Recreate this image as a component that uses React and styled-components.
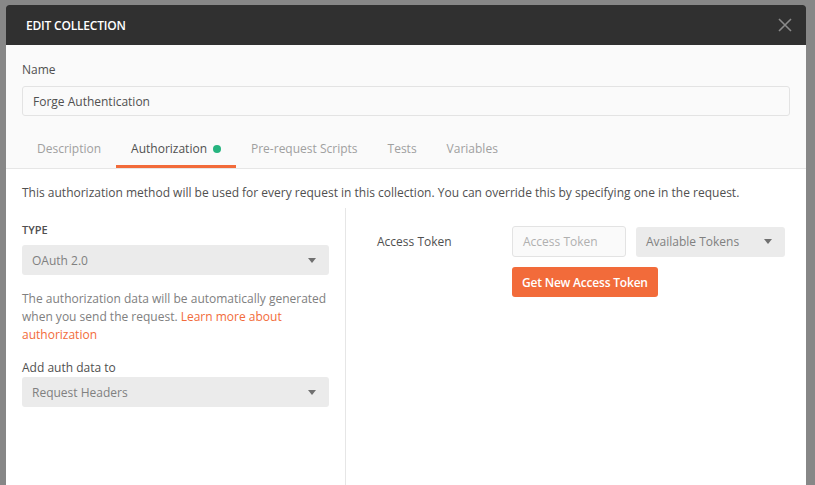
import React from 'react';
import styled, { createGlobalStyle } from 'styled-components';

const GlobalStyle = createGlobalStyle`
  html, body {
    margin: 0;
    padding: 0;
    background: #878787;
    overflow: hidden;
  }
  body {
    font-family: 'Open Sans', 'Noto Sans', sans-serif;
  }
`;

const Backdrop = styled.div`
  width: 815px;
  height: 485px;
  padding: 5px 0 0 6px;
  box-sizing: border-box;
  overflow: hidden;
`;

const Modal = styled.div`
  width: 800px;
  height: 600px;
  background: #fafafa;
  border-radius: 3px 3px 0 0;
  overflow: hidden;
  display: flex;
  flex-direction: column;
`;

const Header = styled.div`
  height: 40px;
  background: #303030;
  display: flex;
  align-items: center;
  justify-content: space-between;
  padding: 0 14px 0 20px;
  flex-shrink: 0;

  & > h2 {
    margin: 0;
    color: #fff;
    font-size: 12px;
    font-weight: 600;
    letter-spacing: -0.2px;
  }
`;

const Close = styled.button`
  border: none;
  background: none;
  padding: 0;
  width: 14px;
  height: 14px;
  display: flex;
  cursor: pointer;
`;

const Top = styled.div`
  padding: 16px 16px 0;
  border-bottom: 1px solid #e6e6e6;
`;

const Label = styled.div`
  font-size: 12px;
  color: #505050;
  line-height: 18px;
  margin-bottom: ${p => p.gap || 0}px;
`;

const NameInput = styled.div`
  height: 28px;
  border: 1px solid #e3e3e3;
  border-radius: 3px;
  background: #fafafa;
  display: flex;
  align-items: center;
  padding: 0 10px;
  font-size: 12px;
  color: #505050;
`;

const Tabs = styled.div`
  display: flex;
  margin-top: 14px;
`;

const Tab = styled.div`
  padding: 0 15px;
  height: 38px;
  display: flex;
  align-items: center;
  gap: 6px;
  font-size: 12px;
  color: ${p => (p.active ? '#505050' : '#a0a0a0')};
  border-bottom: 3px solid ${p => (p.active ? '#f26b3a' : 'transparent')};
  box-sizing: border-box;
  padding-top: 2px;
`;

const Dot = styled.span`
  width: 8px;
  height: 8px;
  border-radius: 50%;
  background: #26b47f;
`;

const Content = styled.div`
  flex: 1;
  background: #fff;
`;

const Intro = styled.p`
  margin: 0;
  padding: 15px 16px 0;
  font-size: 12px;
  line-height: 18px;
  color: #505050;
`;

const Columns = styled.div`
  display: grid;
  grid-template-columns: 340px 1fr;
  margin-top: 6px;
  height: 300px;
`;

const Left = styled.div`
  padding: 13px 16px 0 16px;
  border-right: 1px solid #e6e6e6;
  display: flex;
  flex-direction: column;
`;

const TypeLabel = styled.div`
  font-size: 11px;
  font-weight: 600;
  color: #505050;
  line-height: 18px;
  margin-bottom: 6px;
`;

const Select = styled.div`
  height: 30px;
  background: #ebebeb;
  border-radius: 3px;
  display: flex;
  align-items: center;
  justify-content: space-between;
  padding: 0 13px 0 10px;
  font-size: 12px;
  color: #808080;
  box-sizing: border-box;
`;

const Caret = styled.span`
  width: 0;
  height: 0;
  border-left: 4px solid transparent;
  border-right: 4px solid transparent;
  border-top: 5px solid #707070;
`;

const Help = styled.p`
  margin: 15px 0 15px;
  font-size: 12px;
  line-height: 18px;
  color: #808080;

  & > a {
    color: #f26b3a;
    text-decoration: none;
  }
`;

const Right = styled.div`
  padding: 18px 0 0 31px;
`;

const Row = styled.div`
  display: grid;
  grid-template-columns: 125px 114px 149px;
  column-gap: 10px;
  row-gap: 10px;
  align-items: center;
`;

const FieldLabel = styled.div`
  font-size: 12px;
  color: #505050;
`;

const TokenInput = styled.div`
  height: 29px;
  border: 1px solid #e3e3e3;
  border-radius: 3px;
  background: #fafafa;
  display: flex;
  align-items: center;
  padding: 0 10px;
  font-size: 12px;
  color: #b0b0b0;
`;

const Button = styled.button`
  grid-column: 2 / span 2;
  justify-self: start;
  height: 30px;
  padding: 0 10px;
  border: none;
  border-radius: 3px;
  background: #f26b3a;
  color: #fff;
  font-family: inherit;
  font-size: 12px;
  font-weight: 600;
  letter-spacing: -0.2px;
`;

export default function App() {
  return (
    <Backdrop>
      <GlobalStyle />
      <Modal>
        <Header>
          <h2>EDIT COLLECTION</h2>
          <Close aria-label="Close">
            <svg width="14" height="14" viewBox="0 0 14 14">
              <path d="M1 1 L13 13 M13 1 L1 13" stroke="#8a8a8a" strokeWidth="1.6" />
            </svg>
          </Close>
        </Header>
        <Top>
          <Label gap={7}>Name</Label>
          <NameInput>Forge Authentication</NameInput>
          <Tabs>
            <Tab>Description</Tab>
            <Tab active>
              Authorization <Dot />
            </Tab>
            <Tab>Pre-request Scripts</Tab>
            <Tab>Tests</Tab>
            <Tab>Variables</Tab>
          </Tabs>
        </Top>
        <Content>
          <Intro>
            This authorization method will be used for every request in this collection. You can
            override this by specifying one in the request.
          </Intro>
          <Columns>
            <Left>
              <TypeLabel>TYPE</TypeLabel>
              <Select>
                OAuth 2.0 <Caret />
              </Select>
              <Help>
                The authorization data will be automatically generated when you send the request.{' '}
                <a href="#none">Learn more about authorization</a>
              </Help>
              <Label>Add auth data to</Label>
              <Select>
                Request Headers <Caret />
              </Select>
            </Left>
            <Right>
              <Row>
                <FieldLabel>Access Token</FieldLabel>
                <TokenInput>Access Token</TokenInput>
                <Select>
                  Available Tokens <Caret />
                </Select>
                <Button>Get New Access Token</Button>
              </Row>
            </Right>
          </Columns>
        </Content>
      </Modal>
    </Backdrop>
  );
}
